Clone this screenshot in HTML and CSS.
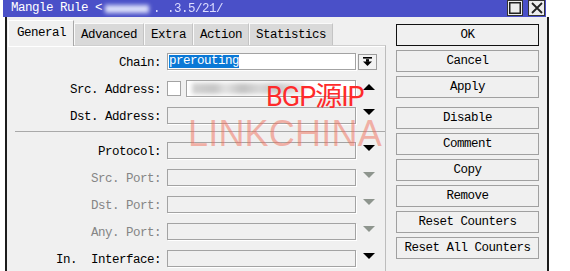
FILE: index.html
```html
<!DOCTYPE html>
<html>
<head>
<meta charset="utf-8">
<link rel="stylesheet" href="styles.css">
</head>
<body>
<div class="window">
  <div class="titlebar">
    <span class="title">Mangle Rule &lt;</span><span class="title-blur"></span><span class="title-blur-text">. .3.5/21/</span>
    <div class="tb-buttons">
      <span class="tb-btn max"><svg width="12" height="12" viewBox="0 0 12 12"><rect x="0.75" y="0.75" width="10.5" height="10.5" fill="none" stroke="#222" stroke-width="1.5"/></svg></span>
      <span class="tb-btn close"><svg width="12" height="12" viewBox="0 0 12 12"><path d="M1 1 L11 11 M11 1 L1 11" stroke="#222" stroke-width="1.8"/></svg></span>
    </div>
  </div>
  <div class="frame">
    <div class="left">
      <div class="tabs">
        <div class="tab active">General</div>
        <div class="tab">Advanced</div>
        <div class="tab">Extra</div>
        <div class="tab">Action</div>
        <div class="tab">Statistics</div>
      </div>
      <div class="panel">
        <div class="group">
          <div class="row">
            <span class="label">Chain:</span>
            <span class="input white"><span class="sel">prerouting</span></span>
            <span class="dd"><svg width="9" height="9" viewBox="0 0 9 9"><rect x="0" y="0" width="9" height="1.6" fill="#000"/><rect x="3" y="2.2" width="3" height="2.6" fill="#000"/><polygon points="0,4.6 9,4.6 4.5,9" fill="#000"/></svg></span>
          </div>
          <div class="row">
            <span class="label">Src. Address:</span>
            <span class="check"></span>
            <span class="input addr white"><span class="ip-blur"></span></span>
            <span class="arrow up"><svg width="12" height="6" viewBox="0 0 12 6"><polygon points="6,0 12,6 0,6" fill="#000"/></svg></span>
          </div>
          <div class="row">
            <span class="label">Dst. Address:</span>
            <span class="input"></span>
            <span class="arrow down2"><svg width="12" height="6" viewBox="0 0 12 6"><polygon points="0,0 12,0 6,6" fill="#000"/></svg></span>
          </div>
        </div>
        <div class="sep"></div>
        <div class="group">
          <div class="row">
            <span class="label">Protocol:</span>
            <span class="input"></span>
            <span class="arrow"><svg width="12" height="6" viewBox="0 0 12 6"><polygon points="0,0 12,0 6,6" fill="#000"/></svg></span>
          </div>
          <div class="row dis">
            <span class="label">Src. Port:</span>
            <span class="input"></span>
            <span class="arrow"><svg width="12" height="6" viewBox="0 0 12 6"><polygon points="0,0 12,0 6,6" fill="#8e958e"/></svg></span>
          </div>
          <div class="row dis">
            <span class="label">Dst. Port:</span>
            <span class="input"></span>
            <span class="arrow"><svg width="12" height="6" viewBox="0 0 12 6"><polygon points="0,0 12,0 6,6" fill="#8e958e"/></svg></span>
          </div>
          <div class="row dis">
            <span class="label">Any. Port:</span>
            <span class="input"></span>
            <span class="arrow"><svg width="12" height="6" viewBox="0 0 12 6"><polygon points="0,0 12,0 6,6" fill="#8e958e"/></svg></span>
          </div>
          <div class="row">
            <span class="label">In.  Interface:</span>
            <span class="input"></span>
            <span class="arrow"><svg width="12" height="6" viewBox="0 0 12 6"><polygon points="0,0 12,0 6,6" fill="#000"/></svg></span>
          </div>
        </div>
      </div>
    </div>
    <div class="buttons">
      <div class="btn default">OK</div>
      <div class="btn">Cancel</div>
      <div class="btn">Apply</div>
      <div class="btn gap">Disable</div>
      <div class="btn">Comment</div>
      <div class="btn">Copy</div>
      <div class="btn">Remove</div>
      <div class="btn">Reset Counters</div>
      <div class="btn">Reset All Counters</div>
    </div>
  </div>
  <div class="wm wm-bgp">BGP源IP</div>
  <div class="wm wm-link">LINKCHINA</div>
</div>
</body>
</html>
```
FILE: styles.css
```css
html, body {
  margin: 0;
  padding: 0;
  background: #ffffff;
  overflow: hidden;
}
body {
  font-family: "Liberation Mono", "DejaVu Sans Mono", monospace;
  font-size: 12.5px;
  letter-spacing: -0.5px;
  color: #000;
}
.window {
  position: relative;
  margin-left: 3px;
  width: 546px;
  height: 271px;
}
.titlebar {
  height: 17px;
  width: 543px;
  background: #4a50c8;
  color: #fff;
  display: flex;
  align-items: center;
}
.title {
  padding-left: 8px;
  white-space: pre;
  line-height: 17px;
}
.title-blur {
  display: inline-block;
  margin-left: 3px;
  width: 44px;
  height: 8px;
  background: rgba(235, 238, 255, 0.9);
  filter: blur(2px);
}
.title-blur-text {
  margin-left: 4px;
  color: #dcdcff;
  filter: blur(0.7px);
  white-space: pre;
}
.tb-buttons {
  margin-left: auto;
  margin-right: 1px;
  align-self: flex-start;
  display: flex;
  gap: 5px;
}
.tb-btn {
  width: 16px;
  height: 16px;
  box-sizing: border-box;
  border: 1px solid #333;
  background: #ececec;
  display: flex;
  align-items: center;
  justify-content: center;
}
.tb-btn.close { width: 17px; }
.frame {
  margin-left: 2px;
  width: 540px;
  height: 254px;
  border-left: 2px solid #1c1c1c;
  border-right: 2px solid #1c1c1c;
  background: #f0f0f0;
  display: flex;
}
.left {
  margin-left: 1px;
  width: 378px;
  padding-top: 3px;
}
.tabs {
  display: flex;
  align-items: flex-end;
  height: 25px;
}
.tab {
  box-sizing: border-box;
  height: 22px;
  padding: 1px 6px 0;
  line-height: 21px;
  background: #d9d9d9;
  border: 1px solid #fafafa;
  border-right-color: #c4c4c4;
  border-bottom: none;
  white-space: pre;
}
.tab.active {
  height: 26px;
  margin-bottom: -1px;
  position: relative;
  z-index: 1;
  padding: 1px 7px 0 8px;
  line-height: 23px;
  background: #f0f0f0;
  border-color: #ffffff;
  border-right-color: #a8a8a8;
}
.panel {
  height: 230px;
  border-top: 1px solid #cfcfcf;
  border-right: 1px solid #bdbdbd;
  box-shadow: inset 0 1px 0 #ffffff;
  padding-top: 7px;
  box-sizing: border-box;
}
.group {
  display: flex;
  flex-direction: column;
  gap: 10px;
}
.row {
  display: flex;
  align-items: center;
  height: 17px;
}
.label {
  width: 153px;
  text-align: right;
  white-space: pre;
  margin-right: 6px;
  padding-top: 2px;
}
.row.dis .label { color: #858585; }
.input {
  box-sizing: border-box;
  width: 189px;
  height: 17px;
  border: 1px solid #a3a3a3;
  box-shadow: 1px 1px 0 #ffffff;
  background: #f0f0f0;
  padding-left: 1px;
  display: flex;
  align-items: center;
  overflow: hidden;
}
.input.white { background: #ffffff; }
.sel {
  background: #0a78d6;
  color: #fff;
  line-height: 13px;
  white-space: pre;
}
.check {
  box-sizing: border-box;
  width: 14px;
  height: 15px;
  border: 1px solid #a3a3a3;
  background: #fff;
  margin-right: 5px;
}
.input.addr { width: 170px; }
.ip-blur {
  display: block;
  margin-left: 4px;
  width: 112px;
  height: 11px;
  background: linear-gradient(90deg, #d2d2d2 0%, #c6c6c6 20%, #e2e2e2 30%, #c2c2c2 45%, #d8d8d8 60%, #c8c8c8 75%, #e8e8e8 100%);
  filter: blur(2px);
}
.dd {
  box-sizing: border-box;
  margin-left: 2px;
  width: 19px;
  height: 16px;
  border: 1px solid #9c9c9c;
  background: #f2f2f2;
  display: flex;
  align-items: center;
  justify-content: center;
}
.arrow {
  margin-left: 7px;
  align-self: flex-start;
  margin-top: 3px;
  display: flex;
}
.arrow.up { margin-top: 4px; }
.arrow.down2 { margin-top: 2px; }
.sep {
  height: 1px;
  background: #a9a9a9;
  margin: 7px 0 10px 7px;
}
.buttons {
  margin-left: 10px;
  padding-top: 7px;
  width: 143px;
  display: flex;
  flex-direction: column;
  gap: 4px;
}
.btn {
  box-sizing: border-box;
  height: 22px;
  padding-top: 1px;
  border: 1px solid #a0a0a0;
  background: #f0f0f0;
  text-align: center;
  line-height: 19px;
  white-space: pre;
}
.btn.default { border-color: #111; }
.btn.gap { margin-top: 5px; }
.wm {
  position: absolute;
  white-space: nowrap;
  line-height: 1;
}
.wm-bgp {
  left: 263px;
  top: 84px;
  font-family: Roboto, "Noto Sans CJK SC", sans-serif;
  font-size: 27px;
  letter-spacing: -1px;
  color: #fe2a2a;
}
.wm-link {
  left: 185px;
  top: 116px;
  font-family: "Liberation Sans", sans-serif;
  font-size: 36px;
  letter-spacing: 0.2px;
  color: rgba(240, 110, 90, 0.5);
}
```
